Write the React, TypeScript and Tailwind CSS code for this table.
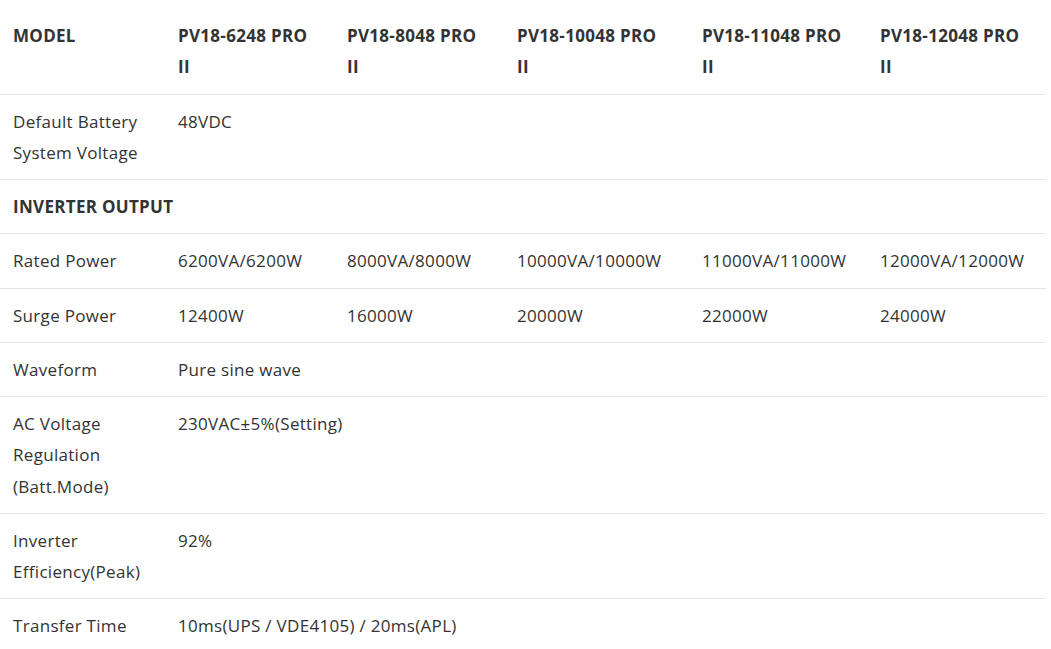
import React from "react";

const models = [
  "PV18-6248 PRO",
  "PV18-8048 PRO",
  "PV18-10048 PRO",
  "PV18-11048 PRO",
  "PV18-12048 PRO",
];

type Row = { label: React.ReactNode; values: string[]; span?: boolean };

const rows: Row[] = [
  { label: <>Default Battery<br />System Voltage</>, values: ["48VDC"], span: true },
];

const rows2: Row[] = [
  {
    label: "Rated Power",
    values: ["6200VA/6200W", "8000VA/8000W", "10000VA/10000W", "11000VA/11000W", "12000VA/12000W"],
  },
  { label: "Surge Power", values: ["12400W", "16000W", "20000W", "22000W", "24000W"] },
  { label: "Waveform", values: ["Pure sine wave"], span: true },
  { label: <>AC Voltage<br />Regulation<br />(Batt.Mode)</>, values: ["230VAC±5%(Setting)"], span: true },
  { label: <>Inverter<br />Efficiency(Peak)</>, values: ["92%"], span: true },
  { label: "Transfer Time", values: ["10ms(UPS / VDE4105) / 20ms(APL)"], span: true },
];

const cell = "align-top pl-[13px] pr-0 pt-[11px] pb-[11px] text-left";

function RowView({ r, last }: { r: Row; last?: boolean }) {
  return (
    <tr className={last ? "" : "border-b border-[#e6e6e6]"}>
      <td className={cell + " whitespace-nowrap"}>{r.label}</td>
      {r.span ? (
        <td className={cell + " whitespace-nowrap"} colSpan={5}>
          {r.values[0]}
        </td>
      ) : (
        r.values.map((v, i) => (
          <td key={i} className={cell + " whitespace-nowrap"}>
            {v}
          </td>
        ))
      )}
    </tr>
  );
}

export default function App() {
  return (
    <div
      className="w-[1051px] h-[649px] bg-white overflow-hidden text-[#333333] text-[17px] tracking-[0.3px] leading-[31.25px]"
      style={{ fontFamily: '"Open Sans", "Noto Sans", sans-serif' }}
    >
      <table className="table-fixed border-collapse w-[1046px]">
        <colgroup>
          <col className="w-[165px]" />
          <col className="w-[169px]" />
          <col className="w-[170px]" />
          <col className="w-[185px]" />
          <col className="w-[178px]" />
          <col className="w-[179px]" />
        </colgroup>
        <thead>
          <tr className="border-b border-[#e6e6e6]">
            <th className="align-top pl-[13px] pr-0 pt-[20px] pb-[11px] text-left font-bold">MODEL</th>
            {models.map((m) => (
              <th key={m} className="align-top pl-[13px] pr-0 pt-[20px] pb-[11px] text-left font-bold whitespace-nowrap">
                {m}
                <br />
                II
              </th>
            ))}
          </tr>
        </thead>
        <tbody>
          {rows.map((r, i) => (
            <RowView key={i} r={r} />
          ))}
          <tr className="border-b border-[#e6e6e6]">
            <td className={cell + " font-bold whitespace-nowrap"} colSpan={6}>
              INVERTER OUTPUT
            </td>
          </tr>
          {rows2.map((r, i) => (
            <RowView key={i} r={r} last={i === rows2.length - 1} />
          ))}
        </tbody>
      </table>
    </div>
  );
}
